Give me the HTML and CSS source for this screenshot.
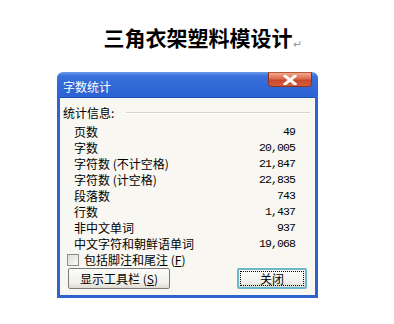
FILE: index.html
```html
<!DOCTYPE html>
<html lang="zh">
<head>
    <meta charset="UTF-8">
    <title>字数统计</title>
    <link rel="stylesheet" href="styles.css">
</head>
<body>
    <!-- Document title -->
    <h1 class="doc-title">三角衣架塑料模设计<span class="para-mark">↵</span></h1>

    <!-- Word count dialog -->
    <div class="dialog">
        <div class="title-bar">
            <span class="title-text">字数统计</span>
            <button class="close-x">
                <svg width="14" height="10" viewBox="0 0 14 10">
                    <path d="M2 1 L12 9 M12 1 L2 9" stroke="#fff" stroke-width="3" stroke-linecap="square"/>
                </svg>
            </button>
        </div>
        <div class="dialog-body">
            <div class="group-head">
                <span>统计信息:</span>
                <span class="group-line"></span>
            </div>
            <div class="stats">
                <span>页数</span><span class="num">49</span>
                <span>字数</span><span class="num">20,005</span>
                <span>字符数 (不计空格)</span><span class="num">21,847</span>
                <span>字符数 (计空格)</span><span class="num">22,835</span>
                <span>段落数</span><span class="num">743</span>
                <span>行数</span><span class="num">1,437</span>
                <span>非中文单词</span><span class="num">937</span>
                <span>中文字符和朝鲜语单词</span><span class="num">19,068</span>
            </div>
            <label class="check-row">
                <span class="check-box"></span>
                <span>包括脚注和尾注 (<u>F</u>)</span>
            </label>
            <div class="buttons">
                <button class="btn">显示工具栏 (<u>S</u>)</button>
                <button class="btn btn-default"><span class="focus">关闭</span></button>
            </div>
        </div>
    </div>
</body>
</html>
```

FILE: styles.css
```css
* {
    margin: 0;
    padding: 0;
    box-sizing: border-box;
}

body {
    background: #fff;
    font-family: "Noto Sans CJK SC", sans-serif;
    width: 394px;
    height: 324px;
    overflow: hidden;
}

/* Document heading */
.doc-title {
    margin-top: 23px;
    height: 28px;
    line-height: 28px;
    text-align: center;
    font-size: 21px;
    font-weight: 700;
    color: #000;
    padding-left: 2px;
}

.para-mark {
    display: inline-block;
    width: 0;
    font-size: 11px;
    font-weight: 400;
    color: #999;
    vertical-align: -2px;
}

/* Dialog frame */
.dialog {
    margin-top: 21px;
    margin-left: 57px;
    width: 261px;
    background: linear-gradient(#6a9cea 0px, #3a70da 4px, #2d63d4 22px, #2f64d2 26px, #2e63cf 100%);
    border-radius: 6px 6px 0 0;
    padding: 0 3px 3px;
}

.title-bar {
    height: 25px;
    position: relative;
    display: flex;
    align-items: center;
    padding-left: 3px;
}

.title-text {
    color: #fff;
    font-size: 12px;
    padding-top: 4px;
}

.close-x {
    position: absolute;
    right: 3px;
    top: 0;
    width: 44px;
    height: 15px;
    border: 1px solid #8a3320;
    border-top-color: #b85a3a;
    border-radius: 0 0 4px 4px;
    background: linear-gradient(#f0a88e, #dc6a4c 45%, #c9482c 55%, #d45e3e);
    display: flex;
    align-items: center;
    justify-content: center;
}

/* Dialog content */
.dialog-body {
    background: #f8f7f1;
    padding: 7px 8px 6px 3px;
    font-size: 12px;
    color: #000;
    border-top: 1px solid #1d4fb8;
}

.group-head {
    display: flex;
    align-items: center;
    height: 16px;
    line-height: 16px;
}

.group-line {
    flex: 1;
    margin-left: 12px;
    margin-right: -3px;
    border-top: 1px solid #d5d3c8;
    border-bottom: 1px solid #fff;
}

.stats {
    display: grid;
    grid-template-columns: 1fr auto;
    margin-top: 3px;
    padding-left: 11px;
    padding-right: 12px;
    line-height: 16px;
}

.num {
    text-align: right;
    font-family: "Liberation Mono", monospace;
    font-size: 11.5px;
    letter-spacing: -0.9px;
}

.check-row {
    display: flex;
    align-items: center;
    gap: 5px;
    height: 16px;
    line-height: 16px;
    padding-left: 4px;
}

.check-box {
    width: 12px;
    height: 12px;
    border: 1px solid #8c8c8c;
    background: linear-gradient(135deg, #dcdcd8, #fbfbf9);
}

.buttons {
    display: flex;
    justify-content: space-between;
    margin-top: 0;
    padding-left: 5px;
}

.btn {
    height: 21px;
    font-family: "Noto Sans CJK SC", sans-serif;
    font-size: 12px;
    color: #000;
    border: 1px solid #7a7a7a;
    border-radius: 2px;
    background: linear-gradient(#fcfcfb, #f1f0ea 70%, #dedcd2);
    line-height: 18px;
}

.buttons .btn:first-child {
    width: 102px;
}

.btn-default {
    width: 70px;
    border: 2px solid #6bb6c8;
    padding: 1px;
}

.focus {
    display: block;
    height: 100%;
    border: 1px dotted #000;
    line-height: 13px;
}
```
